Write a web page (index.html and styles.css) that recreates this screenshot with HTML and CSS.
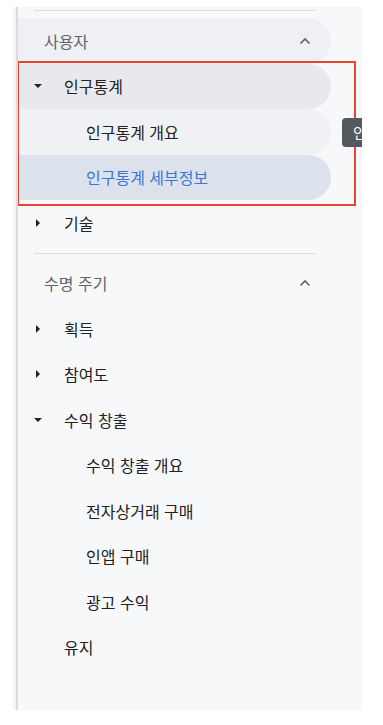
FILE: index.html
```html
<!DOCTYPE html>
<html lang="ko">

<head>
    <meta charset="UTF-8">
    <meta name="viewport" content="width=device-width, initial-scale=1.0">
    <title>보고서 탐색</title>
    <link rel="stylesheet" href="styles.css">
</head>

<body>
    <nav class="nav-panel">
        <div class="divider"></div>

        <div class="section-head pill">
            <span>사용자</span>
            <svg class="chevron" width="12" height="8" viewBox="0 0 12 8"><path d="M1.5 6.5 6 2l4.5 4.5" fill="none" stroke="#5f6368" stroke-width="1.6"/></svg>
        </div>

        <div class="highlight-group">
            <div class="item pill hover">
                <span class="caret down"></span>
                <span>인구통계</span>
            </div>
            <div class="sub-item pill soft">인구통계 개요</div>
            <div class="sub-item pill active">인구통계 세부정보</div>
            <div class="highlight-box"></div>
            <div class="tooltip">인</div>
        </div>

        <div class="item">
            <span class="caret right"></span>
            <span>기술</span>
        </div>

        <div class="divider"></div>

        <div class="section-head">
            <span>수명 주기</span>
            <svg class="chevron" width="12" height="8" viewBox="0 0 12 8"><path d="M1.5 6.5 6 2l4.5 4.5" fill="none" stroke="#5f6368" stroke-width="1.6"/></svg>
        </div>

        <div class="item">
            <span class="caret right"></span>
            <span>획득</span>
        </div>
        <div class="item">
            <span class="caret right"></span>
            <span>참여도</span>
        </div>
        <div class="item">
            <span class="caret down"></span>
            <span>수익 창출</span>
        </div>
        <div class="sub-item">수익 창출 개요</div>
        <div class="sub-item">전자상거래 구매</div>
        <div class="sub-item">인앱 구매</div>
        <div class="sub-item">광고 수익</div>

        <div class="item">
            <span class="caret none"></span>
            <span>유지</span>
        </div>
    </nav>
</body>

</html>
```

FILE: styles.css
```css
body {
    margin: 0;
    background-color: #fff;
    font-family: 'Noto Sans CJK KR', 'Noto Sans', sans-serif;
    font-size: 16px;
    color: #202124;
}

.nav-panel {
    margin: 7px 0 0 16px;
    width: 346px;
    height: 703px;
    padding-top: 3px;
    box-sizing: border-box;
    background-color: #f7f8fa;
    border-left: 2px solid #dadce0;
    box-shadow: -3px 0 0 #f3f4f6;
    overflow: hidden;
}

.divider {
    width: 282px;
    height: 1px;
    background-color: #dadce0;
    margin: 0 0 7px 16px;
}

.item + .divider {
    margin-top: 7px;
}

.pill {
    width: 313px;
    border-radius: 0 23px 23px 0;
}

.section-head {
    display: flex;
    align-items: center;
    justify-content: space-between;
    height: 45.5px;
    width: 313px;
    box-sizing: border-box;
    padding: 0 20px 0 26px;
    color: #5f6368;
}

.section-head.pill {
    background-color: #eff0f3;
}

.chevron {
    display: block;
}

.item {
    display: flex;
    align-items: center;
    height: 45.5px;
    padding-left: 16px;
    box-sizing: border-box;
}

.caret {
    width: 30px;
    height: 8px;
    display: block;
    position: relative;
}

.caret.down::before {
    content: "";
    position: absolute;
    left: 0;
    top: 2px;
    border-left: 4px solid transparent;
    border-right: 4px solid transparent;
    border-top: 4px solid #202124;
}

.caret.right::before {
    content: "";
    position: absolute;
    left: 2px;
    top: 0;
    border-top: 4px solid transparent;
    border-bottom: 4px solid transparent;
    border-left: 4px solid #202124;
}

.sub-item {
    display: flex;
    align-items: center;
    height: 45.5px;
    padding-left: 68px;
    box-sizing: border-box;
}

.hover {
    background-color: #e8e9ed;
}

.soft {
    background-color: #f0f1f4;
}

.active {
    background-color: #dce2ec;
    color: #3a76d6;
}

.highlight-group {
    position: relative;
}

.highlight-box {
    position: absolute;
    top: -3px;
    left: -1px;
    width: 339px;
    bottom: -6px;
    border: 2px solid #e8442e;
    box-sizing: border-box;
    pointer-events: none;
}

.tooltip {
    position: absolute;
    top: 54px;
    left: 324px;
    height: 29px;
    padding: 0 8px 0 11px;
    line-height: 29px;
    border-radius: 4px;
    background-color: #55585c;
    color: #fff;
    font-size: 15px;
    white-space: nowrap;
}
```
